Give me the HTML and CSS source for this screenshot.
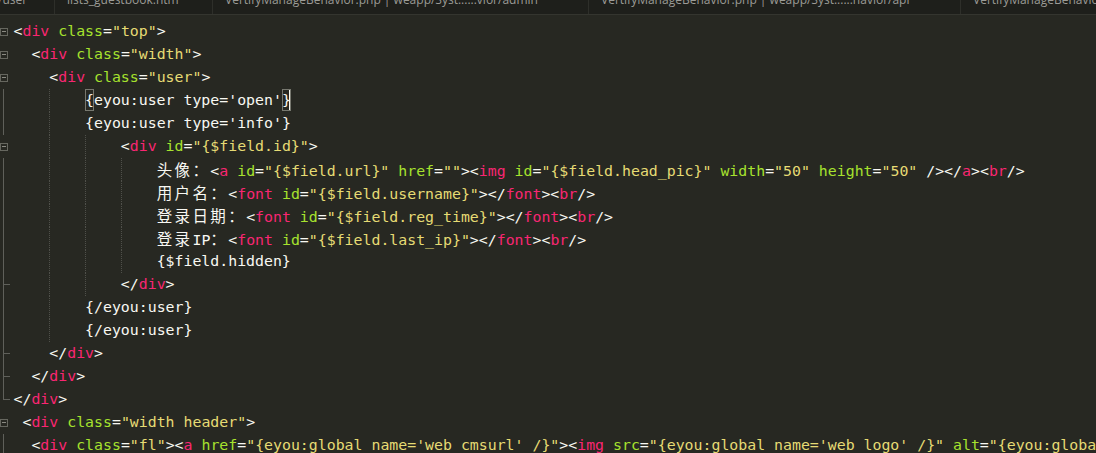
FILE: index.html
```html
<!DOCTYPE html>
<html lang="zh-CN">
<head>
  <meta charset="UTF-8" />
  <title>head.htm - Sublime Text</title>
  <link rel="stylesheet" href="styles.css">
</head>
<body>

<div class="tabs">
  <div class="tab tab-1"><span class="tab-name">/user</span></div>
  <div class="tab tab-2"><span class="tab-name">lists_guestbook.htm</span></div>
  <div class="tab tab-3"><span class="tab-name">VertifyManageBehavior.php | weapp/Syst......vior/admin</span></div>
  <div class="tab tab-4"><span class="tab-name">VertifyManageBehavior.php | weapp/Syst......havior/api</span></div>
  <div class="tab tab-5"><span class="tab-name">VertifyManageBehavior.php | weapp/Syst......havior/home</span></div>
</div>

<div class="editor">
  <div class="line"><span class="fold"><span class="box"></span></span><span class="code">&lt;<span class="t">div</span> <span class="a">class</span>=<span class="s">"top"</span>&gt;</span></div>
  <div class="line"><span class="fold"><span class="box"></span></span><span class="code">  &lt;<span class="t">div</span> <span class="a">class</span>=<span class="s">"width"</span>&gt;</span></div>
  <div class="line"><span class="fold"><span class="box"></span></span><span class="code">    &lt;<span class="t">div</span> <span class="a">class</span>=<span class="s">"user"</span>&gt;</span></div>
  <div class="line"><span class="fold v"></span><span class="code"><i class="ind"></i><i class="ind g"></i><span class="br">{</span>eyou:user type='open'<span class="br cur">}</span></span></div>
  <div class="line"><span class="fold v"></span><span class="code"><i class="ind"></i><i class="ind g"></i>{eyou:user type='info'}</span></div>
  <div class="line"><span class="fold"><span class="box"></span></span><span class="code"><i class="ind"></i><i class="ind g"></i><i class="ind g"></i>&lt;<span class="t">div</span> <span class="a">id</span>=<span class="s">"{$field.id}"</span>&gt;</span></div>
  <div class="line"><span class="fold v"></span><span class="code"><i class="ind"></i><i class="ind g"></i><i class="ind g"></i><i class="ind g"></i><span class="cjk">头像：</span>&lt;<span class="t">a</span> <span class="a">id</span>=<span class="s">"{$field.url}"</span> <span class="a">href</span>=<span class="s">""</span>&gt;&lt;<span class="t">img</span> <span class="a">id</span>=<span class="s">"{$field.head_pic}"</span> <span class="a">width</span>=<span class="s">"50"</span> <span class="a">height</span>=<span class="s">"50"</span> /&gt;&lt;/<span class="t">a</span>&gt;&lt;<span class="t">br</span>/&gt;</span></div>
  <div class="line"><span class="fold v"></span><span class="code"><i class="ind"></i><i class="ind g"></i><i class="ind g"></i><i class="ind g"></i><span class="cjk">用户名：</span>&lt;<span class="t">font</span> <span class="a">id</span>=<span class="s">"{$field.username}"</span>&gt;&lt;/<span class="t">font</span>&gt;&lt;<span class="t">br</span>/&gt;</span></div>
  <div class="line"><span class="fold v"></span><span class="code"><i class="ind"></i><i class="ind g"></i><i class="ind g"></i><i class="ind g"></i><span class="cjk">登录日期：</span>&lt;<span class="t">font</span> <span class="a">id</span>=<span class="s">"{$field.reg_time}"</span>&gt;&lt;/<span class="t">font</span>&gt;&lt;<span class="t">br</span>/&gt;</span></div>
  <div class="line"><span class="fold v"></span><span class="code"><i class="ind"></i><i class="ind g"></i><i class="ind g"></i><i class="ind g"></i><span class="cjk">登录</span>IP<span class="cjk">：</span>&lt;<span class="t">font</span> <span class="a">id</span>=<span class="s">"{$field.last_ip}"</span>&gt;&lt;/<span class="t">font</span>&gt;&lt;<span class="t">br</span>/&gt;</span></div>
  <div class="line"><span class="fold v"></span><span class="code"><i class="ind"></i><i class="ind g"></i><i class="ind g"></i><i class="ind g"></i>{$field.hidden}</span></div>
  <div class="line"><span class="fold v tick"></span><span class="code"><i class="ind"></i><i class="ind g"></i><i class="ind g"></i>&lt;/<span class="t">div</span>&gt;</span></div>
  <div class="line"><span class="fold v"></span><span class="code"><i class="ind"></i><i class="ind g"></i>{/eyou:user}</span></div>
  <div class="line"><span class="fold v"></span><span class="code"><i class="ind"></i><i class="ind g"></i>{/eyou:user}</span></div>
  <div class="line"><span class="fold v tick"></span><span class="code">    &lt;/<span class="t">div</span>&gt;</span></div>
  <div class="line"><span class="fold v tick"></span><span class="code">  &lt;/<span class="t">div</span>&gt;</span></div>
  <div class="line"><span class="fold corner"></span><span class="code">&lt;/<span class="t">div</span>&gt;</span></div>
  <div class="line"><span class="fold"><span class="box"></span></span><span class="code"> &lt;<span class="t">div</span> <span class="a">class</span>=<span class="s">"width header"</span>&gt;</span></div>
  <div class="line"><span class="fold v"></span><span class="code">  &lt;<span class="t">div</span> <span class="a">class</span>=<span class="s">"fl"</span>&gt;&lt;<span class="t">a</span> <span class="a">href</span>=<span class="s">"{eyou:global name='web cmsurl' /}"</span>&gt;&lt;<span class="t">img</span> <span class="a">src</span>=<span class="s">"{eyou:global name='web logo' /}"</span> <span class="a">alt</span>=<span class="s">"{eyou:global name='web_name' /}"</span> /&gt;&lt;/<span class="t">a</span>&gt;&lt;/<span class="t">div</span>&gt;</span></div>
</div>

</body>
</html>
```

FILE: styles.css
```css
html, body {
  margin: 0;
  background: #272822;
  overflow: hidden;
}

.tabs {
  display: flex;
  height: 14px;
  background: #1e1f1b;
  border-bottom: 1px solid #34352f;
  overflow: hidden;
  white-space: nowrap;
}

.tab {
  flex: none;
  box-sizing: border-box;
  height: 14px;
  padding-left: 12px;
  border-right: 1px solid #2e2f2a;
  overflow: hidden;
}

.tab-1 { width: 55px; padding-left: 0; }
.tab-2 { width: 158px; }
.tab-3 { width: 376px; }
.tab-4 { width: 372px; }
.tab-5 { width: 200px; border-right: none; }

.tab-name {
  display: block;
  margin-top: -8px;
  margin-left: -2px;
  font-family: "Open Sans", "Noto Sans", sans-serif;
  font-size: 12px;
  line-height: 16px;
  color: #9b9b96;
}

.tab-2 .tab-name,
.tab-3 .tab-name,
.tab-4 .tab-name,
.tab-5 .tab-name {
  margin-left: 0;
}

.editor {
  padding-top: 5px;
  width: 1096px;
  overflow: hidden;
  font-family: "DejaVu Sans Mono", "Liberation Mono", monospace;
  font-size: 14.87px;
  color: #f8f8f2;
}

.line {
  display: flex;
  height: 23px;
  line-height: 23px;
  white-space: pre;
}

.fold {
  flex: none;
  width: 13.5px;
  height: 23px;
  display: flex;
  align-items: center;
}

.fold .box {
  box-sizing: border-box;
  width: 8px;
  height: 8px;
  margin-left: 0;
  border: 1px solid #66675f;
  background: linear-gradient(#8a8a82, #8a8a82) no-repeat center / 4px 1px;
}

.fold.v {
  background: linear-gradient(#5f605a, #5f605a) no-repeat 3px 0 / 1px 100%;
}

.fold.v.tick {
  background:
    linear-gradient(#5f605a, #5f605a) no-repeat 3px 0 / 1px 100%,
    linear-gradient(#5f605a, #5f605a) no-repeat 3px 11px / 7px 1px;
}

.fold.corner {
  background:
    linear-gradient(#5f605a, #5f605a) no-repeat 3px 0 / 1px 12px,
    linear-gradient(#5f605a, #5f605a) no-repeat 3px 11px / 7px 1px;
}

.code {
  flex: none;
}

.ind {
  display: inline-block;
  width: 4ch;
  height: 23px;
  vertical-align: top;
}

.ind.g {
  background: linear-gradient(#4f504a 50%, transparent 50%) repeat-y left top / 1px 2px;
}

.t { color: #f92672; }
.a { color: #a6e22e; }
.s { color: #e6db74; }

.cjk {
  font-family: "Noto Sans CJK SC", sans-serif;
  font-size: 15.5px;
  letter-spacing: 2.4px;
}

.br {
  display: inline-block;
  width: 1ch;
  height: 22px;
  vertical-align: top;
  box-shadow: inset 0 0 0 1px #77786f;
}

.br.cur {
  box-shadow: inset 0 0 0 1px #77786f, inset -2px 0 0 #f8f8f0;
}
```
